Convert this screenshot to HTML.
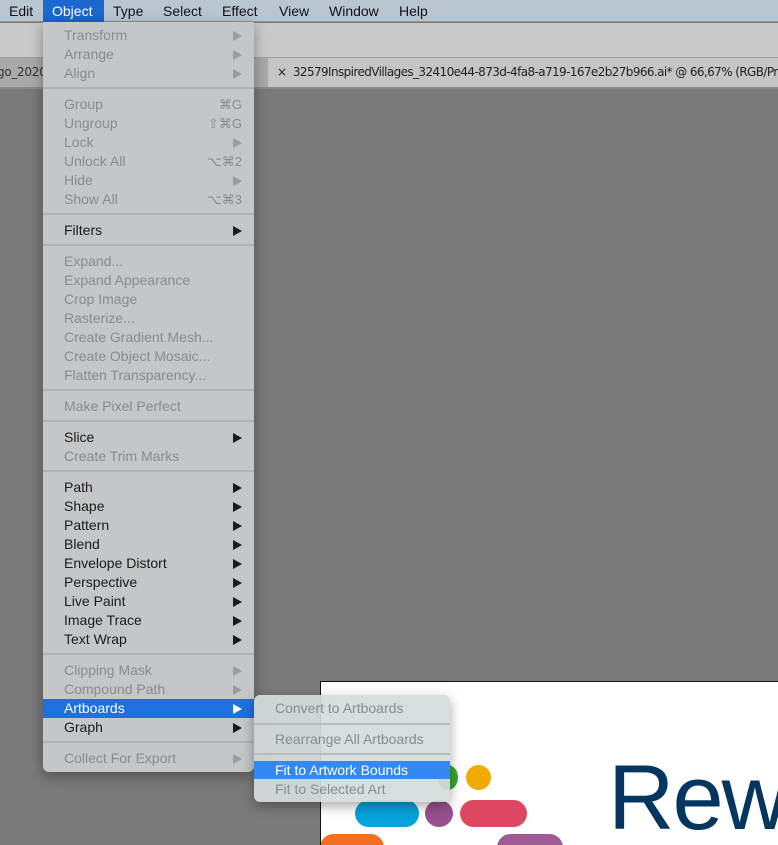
<!DOCTYPE html><html><head><style>
*{margin:0;padding:0;box-sizing:border-box}
html,body{width:778px;height:845px;overflow:hidden}
body{background:#7a7a7a;font-family:"Liberation Sans",sans-serif;position:relative}
.a{position:absolute}
.mb{left:0;top:0;width:778px;height:22px;background:#b9c6d2;border-bottom:1px solid #8c949c;font-size:14px;color:#111}
.mb span{position:absolute;top:3px}
.menu{left:43px;top:22px;width:211px;height:750px;background:#c4c6c8;border-radius:0 0 6px 6px;box-shadow:0 4px 14px rgba(0,0,0,.35)}
.it{position:absolute;left:0;width:100%;height:19px;font-size:14px;line-height:19px;padding-left:21px;color:#1b1b1b;margin-top:1px}
.d{color:#898c8f}
.it .r{position:absolute;right:12px;top:0;font-size:13px}
.tri{position:absolute;right:12px;top:5px;width:0;height:0;border-left:9px solid #1b1b1b;border-top:5px solid transparent;border-bottom:5px solid transparent}
.d .tri{border-left-color:#9a9da0}
.sep{position:absolute;left:0;width:100%;height:2px;background:#b0b2b4}
.hl{background:#1e70e0;color:#fff}
.hl .tri{border-left-color:#fff}
#clip{position:absolute;left:0;top:0;width:778px;height:845px;overflow:hidden}
</style></head><body><div id="clip">
<div class="a mb">
<span style="left:9px">Edit</span>
<div class="a" style="left:43px;top:0;width:61px;height:22px;background:#1c67d0"></div>
<span style="left:52px;color:#fff">Object</span>
<span style="left:113px">Type</span><span style="left:163px">Select</span><span style="left:222px">Effect</span><span style="left:279px">View</span><span style="left:329px">Window</span><span style="left:399px">Help</span>
</div>
<div class="a" style="left:0;top:23px;width:778px;height:35px;background:#c9c9c9;border-bottom:1px solid #a0a0a0"></div>
<div class="a" style="left:0;top:58px;width:268px;height:29px;background:#a9a9a9"></div>
<div class="a" style="left:268px;top:58px;width:510px;height:29px;background:#c5c5c5;font-size:12px;color:#222;line-height:29px;padding-left:9px;white-space:nowrap;overflow:hidden;font-family:'DejaVu Sans',sans-serif;letter-spacing:-0.6px">×&nbsp;&nbsp;32579InspiredVillages_32410e44-873d-4fa8-a719-167e2b27b966.ai* @ 66,67% (RGB/Preview)</div>
<div class="a" style="left:0;top:58px;width:43px;height:29px;font-size:12px;color:#333;line-height:29px;font-family:'DejaVu Sans',sans-serif;letter-spacing:-0.3px;overflow:hidden;white-space:nowrap;text-indent:-3px">go_2020</div>
<div class="a" style="left:0;top:87px;width:778px;height:2px;background:#8a8a8a"></div>
<div class="a" style="left:320px;top:681px;width:458px;height:164px;background:#fff;border-left:1px solid #111;border-top:1px solid #111;overflow:hidden">
<div class="a" style="left:145px;top:83px;width:25px;height:25px;border-radius:50%;background:#f2a900"></div>
<div class="a" style="left:117px;top:83px;width:20px;height:25px;border-radius:50%;background:#3aa535"></div>
<div class="a" style="left:34px;top:118px;width:64px;height:27px;border-radius:14px;background:#05a2dc"></div>
<div class="a" style="left:104px;top:118px;width:28px;height:27px;border-radius:50%;background:#9a4f8f"></div>
<div class="a" style="left:139px;top:118px;width:67px;height:27px;border-radius:14px;background:#de4761"></div>
<div class="a" style="left:-1px;top:152px;width:64px;height:27px;border-radius:14px;background:#f36f21"></div>
<div class="a" style="left:176px;top:152px;width:66px;height:27px;border-radius:14px;background:#a05a96"></div>
<div class="a" style="left:287px;top:66px;font-size:92px;color:#05365f;line-height:100px;letter-spacing:-2px;white-space:nowrap">Rew</div>
</div>
<div class="a menu">
<div class="it d" style="top:3px">Transform<i class="tri"></i></div>
<div class="it d" style="top:22px">Arrange<i class="tri"></i></div>
<div class="it d" style="top:41px">Align<i class="tri"></i></div>
<div class="sep" style="top:65px"></div>
<div class="it d" style="top:72px">Group<span class="r">⌘G</span></div>
<div class="it d" style="top:91px">Ungroup<span class="r">⇧⌘G</span></div>
<div class="it d" style="top:110px">Lock<i class="tri"></i></div>
<div class="it d" style="top:129px">Unlock All<span class="r">⌥⌘2</span></div>
<div class="it d" style="top:148px">Hide<i class="tri"></i></div>
<div class="it d" style="top:167px">Show All<span class="r">⌥⌘3</span></div>
<div class="sep" style="top:191px"></div>
<div class="it" style="top:198px">Filters<i class="tri"></i></div>
<div class="sep" style="top:222px"></div>
<div class="it d" style="top:229px">Expand...</div>
<div class="it d" style="top:248px">Expand Appearance</div>
<div class="it d" style="top:267px">Crop Image</div>
<div class="it d" style="top:286px">Rasterize...</div>
<div class="it d" style="top:305px">Create Gradient Mesh...</div>
<div class="it d" style="top:324px">Create Object Mosaic...</div>
<div class="it d" style="top:343px">Flatten Transparency...</div>
<div class="sep" style="top:367px"></div>
<div class="it d" style="top:374px">Make Pixel Perfect</div>
<div class="sep" style="top:398px"></div>
<div class="it" style="top:405px">Slice<i class="tri"></i></div>
<div class="it d" style="top:424px">Create Trim Marks</div>
<div class="sep" style="top:448px"></div>
<div class="it" style="top:455px">Path<i class="tri"></i></div>
<div class="it" style="top:474px">Shape<i class="tri"></i></div>
<div class="it" style="top:493px">Pattern<i class="tri"></i></div>
<div class="it" style="top:512px">Blend<i class="tri"></i></div>
<div class="it" style="top:531px">Envelope Distort<i class="tri"></i></div>
<div class="it" style="top:550px">Perspective<i class="tri"></i></div>
<div class="it" style="top:569px">Live Paint<i class="tri"></i></div>
<div class="it" style="top:588px">Image Trace<i class="tri"></i></div>
<div class="it" style="top:607px">Text Wrap<i class="tri"></i></div>
<div class="sep" style="top:631px"></div>
<div class="it d" style="top:638px">Clipping Mask<i class="tri"></i></div>
<div class="it d" style="top:657px">Compound Path<i class="tri"></i></div>
<div class="it hl" style="top:676px">Artboards<i class="tri"></i></div>
<div class="it" style="top:695px">Graph<i class="tri"></i></div>
<div class="sep" style="top:719px"></div>
<div class="it d" style="top:726px">Collect For Export<i class="tri"></i></div>
</div>
<div class="a" style="left:254px;top:695px;width:196px;height:107px;background:rgba(212,220,218,.93);border-radius:6px;box-shadow:0 4px 12px rgba(0,0,0,.35)">
<div class="it d" style="top:3px">Convert to Artboards</div>
<div class="sep" style="top:28px;background:#b8bdbb"></div>
<div class="it d" style="top:34px">Rearrange All Artboards</div>
<div class="sep" style="top:58px;background:#b8bdbb"></div>
<div class="it" style="top:65px;height:18px;background:#3388f2;color:#fff;line-height:18px">Fit to Artwork Bounds</div>
<div class="it d" style="top:84px">Fit to Selected Art</div>
</div>
</div></body></html>
